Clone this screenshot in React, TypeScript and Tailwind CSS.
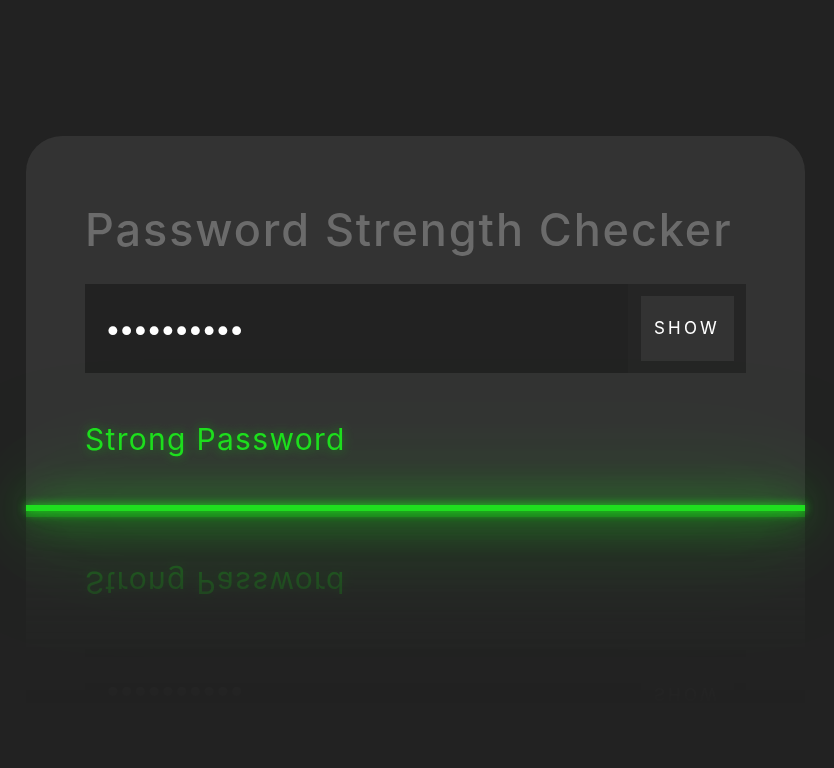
import { useState } from "react"

export default function App() {
  const [show, setShow] = useState(false)

  return (
    <div className="min-h-screen bg-[#222222] pt-[136px] font-['Inter',sans-serif]">
      {/* card with reflection underneath */}
      <div className="relative ml-[26px] w-[779px] rounded-t-[36px] bg-[#333333] px-[59px] pt-[68px] pb-[54px] [-webkit-box-reflect:below_0_linear-gradient(transparent_48%,rgba(0,0,0,0.03)_62%,rgba(0,0,0,0.4))]">
        <h1 className="text-[45px] leading-[52px] font-medium tracking-[1.9px] text-[#6b6b6b]">
          Password Strength Checker
        </h1>

        <div className="mt-[28px] flex h-[89px] bg-[#222222]">
          <input
            type={show ? "text" : "password"}
            readOnly
            value="abcdefghij"
            className="min-w-0 flex-1 bg-transparent pl-[20px] text-[28px] tracking-[-2px] text-white outline-none"
          />
          <div className="flex w-[118px] items-center justify-center bg-[#252525]">
            <button
              onClick={() => setShow(!show)}
              className="flex h-[65px] w-[93px] items-center justify-center bg-[#333333] text-[17px] tracking-[3.2px] text-white"
            >
              SHOW
            </button>
          </div>
        </div>

        <p className="mt-[48px] text-[30px] leading-[36px] tracking-[1.3px] text-[#1fdf1f] [text-shadow:0_0_12px_rgba(31,223,31,0.5)]">
          Strong Password
        </p>

        {/* glowing strength bar */}
        <div className="absolute bottom-0 left-0 h-[6px] w-full bg-[#1fdf1f] shadow-[0_0_10px_#1fdf1f,0_0_40px_#1fdf1f,0_0_80px_#1fdf1f,0_0_130px_rgba(31,223,31,0.6)]" />
      </div>
    </div>
  )
}
